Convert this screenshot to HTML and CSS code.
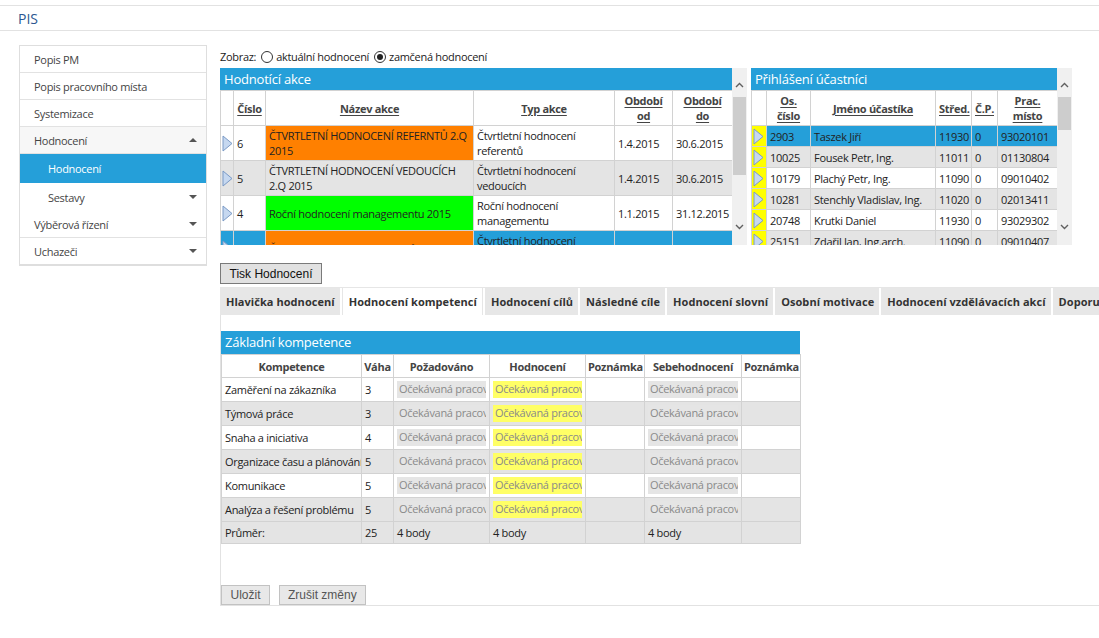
FILE: index.html
```html
<!DOCTYPE html>
<html lang="cs">
<head>
<meta charset="utf-8">
<title>PIS</title>
<link rel="stylesheet" href="styles.css">
</head>
<body>
<header class="topbar"><span class="brand">PIS</span></header>
<div class="layout">
  <nav class="sidebar">
    <div class="nav-item">Popis PM</div>
    <div class="nav-item">Popis pracovního místa</div>
    <div class="nav-item">Systemizace</div>
    <div class="nav-item nav-open">Hodnocení <span class="caret up"></span></div>
    <div class="nav-sub active">Hodnocení</div>
    <div class="nav-sub">Sestavy <span class="caret"></span></div>
    <div class="nav-item">Výběrová řízení <span class="caret"></span></div>
    <div class="nav-item last">Uchazeči <span class="caret"></span></div>
  </nav>
  <main class="main">
    <div class="filter">Zobraz: <span class="radio"></span> aktuální hodnocení <span class="radio checked"></span> zamčená hodnocení</div>
    <div class="panels">
      <section class="panel">
        <div class="panel-body akce">
          <div class="panel-head">Hodnotící akce</div>
          <table class="grid">
            <colgroup><col style="width:13px"><col style="width:32px"><col style="width:208px"><col style="width:141px"><col style="width:58px"><col style="width:60px"></colgroup>
            <tr class="hrow tall"><th></th><th><u>Číslo</u></th><th><u>Název akce</u></th><th><u>Typ akce</u></th><th><u>Období od</u></th><th><u>Období do</u></th></tr>
            <tr class="row2"><td class="ic"><svg class="tri" viewBox="0 0 11 17"><path d="M1 1 L10 8.5 L1 16 Z"/></svg></td><td>6</td><td class="orange">ČTVRTLETNÍ HODNOCENÍ REFERNTŮ 2.Q 2015</td><td>Čtvrtletní hodnocení referentů</td><td>1.4.2015</td><td>30.6.2015</td></tr>
            <tr class="row2 alt"><td class="ic"><svg class="tri" viewBox="0 0 11 17"><path d="M1 1 L10 8.5 L1 16 Z"/></svg></td><td>5</td><td>ČTVRTLETNÍ HODNOCENÍ VEDOUCÍCH 2.Q 2015</td><td>Čtvrtletní hodnocení vedoucích</td><td>1.4.2015</td><td>30.6.2015</td></tr>
            <tr class="row2"><td class="ic"><svg class="tri" viewBox="0 0 11 17"><path d="M1 1 L10 8.5 L1 16 Z"/></svg></td><td>4</td><td class="green">Roční hodnocení managementu 2015</td><td>Roční hodnocení managementu</td><td>1.1.2015</td><td>31.12.2015</td></tr>
            <tr class="row2 sel"><td class="ic"><svg class="tri" viewBox="0 0 11 17"><path d="M1 1 L10 8.5 L1 16 Z"/></svg></td><td>3</td><td class="orange one">Čtvrtletní hodnocení referentů 1.Q 2015</td><td>Čtvrtletní hodnocení referentů</td><td>1.1.2015</td><td>31.3.2015</td></tr>
          </table>
        </div>
        <div class="scroll">
          <div class="sb-up"><svg viewBox="0 0 9 6"><path d="M1 5 L4.5 1.5 L8 5"/></svg></div>
          <div class="thumb big"></div>
          <div class="sb-fill"></div>
          <div class="sb-down"><svg viewBox="0 0 9 6"><path d="M1 1 L4.5 4.5 L8 1"/></svg></div>
        </div>
      </section>
      <section class="panel">
        <div class="panel-body ucast">
          <div class="panel-head">Přihlášení účastníci</div>
          <table class="grid">
            <colgroup><col style="width:15px"><col style="width:44px"><col style="width:125px"><col style="width:36px"><col style="width:26px"><col style="width:60px"></colgroup>
            <tr class="hrow tall"><th></th><th><u>Os. číslo</u></th><th><u>Jméno účastíka</u></th><th><u>Střed.</u></th><th><u>Č.P.</u></th><th><u>Prac. místo</u></th></tr>
            <tr class="row1 sel"><td class="ic y"><svg class="tri" viewBox="0 0 11 17"><path d="M1 1 L10 8.5 L1 16 Z"/></svg></td><td>2903</td><td>Taszek Jiří</td><td>11930</td><td>0</td><td>93020101</td></tr>
            <tr class="row1 alt"><td class="ic y"><svg class="tri" viewBox="0 0 11 17"><path d="M1 1 L10 8.5 L1 16 Z"/></svg></td><td>10025</td><td>Fousek Petr, Ing.</td><td>11011</td><td>0</td><td>01130804</td></tr>
            <tr class="row1"><td class="ic y"><svg class="tri" viewBox="0 0 11 17"><path d="M1 1 L10 8.5 L1 16 Z"/></svg></td><td>10179</td><td>Plachý Petr, Ing.</td><td>11090</td><td>0</td><td>09010402</td></tr>
            <tr class="row1 alt"><td class="ic y"><svg class="tri" viewBox="0 0 11 17"><path d="M1 1 L10 8.5 L1 16 Z"/></svg></td><td>10281</td><td>Stenchly Vladislav, Ing.</td><td>11020</td><td>0</td><td>02013411</td></tr>
            <tr class="row1"><td class="ic y"><svg class="tri" viewBox="0 0 11 17"><path d="M1 1 L10 8.5 L1 16 Z"/></svg></td><td>20748</td><td>Krutki Daniel</td><td>11930</td><td>0</td><td>93029302</td></tr>
            <tr class="row1 alt"><td class="ic y"><svg class="tri" viewBox="0 0 11 17"><path d="M1 1 L10 8.5 L1 16 Z"/></svg></td><td>25151</td><td>Zdařil Jan, Ing.arch.</td><td>11090</td><td>0</td><td>09010407</td></tr>
          </table>
        </div>
        <div class="scroll">
          <div class="sb-up"><svg viewBox="0 0 9 6"><path d="M1 5 L4.5 1.5 L8 5"/></svg></div>
          <div class="thumb small"></div>
          <div class="sb-fill"></div>
          <div class="sb-down"><svg viewBox="0 0 9 6"><path d="M1 1 L4.5 4.5 L8 1"/></svg></div>
        </div>
      </section>
    </div>
    <button class="btn print">Tisk Hodnocení</button>
    <div class="tabs">
      <span class="tab">Hlavička hodnocení</span><span class="tab active">Hodnocení kompetencí</span><span class="tab">Hodnocení cílů</span><span class="tab">Následné cíle</span><span class="tab">Hodnocení slovní</span><span class="tab">Osobní motivace</span><span class="tab">Hodnocení vzdělávacích akcí</span><span class="tab">Doporučení</span>
    </div>
    <div class="tab-content">
      <div class="komp">
        <div class="panel-head kh">Základní kompetence</div>
        <table class="grid kgrid">
          <colgroup><col style="width:140px"><col style="width:32px"><col style="width:96px"><col style="width:96px"><col style="width:59px"><col style="width:97px"><col style="width:59px"></colgroup>
          <tr class="khead"><th>Kompetence</th><th>Váha</th><th>Požadováno</th><th>Hodnocení</th><th>Poznámka</th><th>Sebehodnocení</th><th>Poznámka</th></tr>
          <tr class="krow"><td>Zaměření na zákazníka</td><td>3</td><td><span class="inp">Očekávaná pracovní</span></td><td><span class="inp yel">Očekávaná pracovní</span></td><td></td><td><span class="inp">Očekávaná pracovní</span></td><td></td></tr>
          <tr class="krow alt"><td>Týmová práce</td><td>3</td><td><span class="inp">Očekávaná pracovní</span></td><td><span class="inp yel">Očekávaná pracovní</span></td><td></td><td><span class="inp">Očekávaná pracovní</span></td><td></td></tr>
          <tr class="krow"><td>Snaha a iniciativa</td><td>4</td><td><span class="inp">Očekávaná pracovní</span></td><td><span class="inp yel">Očekávaná pracovní</span></td><td></td><td><span class="inp">Očekávaná pracovní</span></td><td></td></tr>
          <tr class="krow alt"><td>Organizace času a plánování</td><td>5</td><td><span class="inp">Očekávaná pracovní</span></td><td><span class="inp yel">Očekávaná pracovní</span></td><td></td><td><span class="inp">Očekávaná pracovní</span></td><td></td></tr>
          <tr class="krow"><td>Komunikace</td><td>5</td><td><span class="inp">Očekávaná pracovní</span></td><td><span class="inp yel">Očekávaná pracovní</span></td><td></td><td><span class="inp">Očekávaná pracovní</span></td><td></td></tr>
          <tr class="krow alt"><td>Analýza a řešení problému</td><td>5</td><td><span class="inp">Očekávaná pracovní</span></td><td><span class="inp yel">Očekávaná pracovní</span></td><td></td><td><span class="inp">Očekávaná pracovní</span></td><td></td></tr>
          <tr class="kfoot alt"><td>Průměr:</td><td>25</td><td>4 body</td><td>4 body</td><td></td><td>4 body</td><td></td></tr>
        </table>
      </div>
      <div class="actions">
        <button class="btn dis save">Uložit</button>
        <button class="btn dis">Zrušit změny</button>
      </div>
    </div>
  </main>
</div>
</body>
</html>
```

FILE: styles.css
```css
* { box-sizing: border-box; }

body {
  margin: 0;
  font-family: "Open Sans", "Noto Sans", sans-serif;
  font-size: 11px;
  letter-spacing: -0.3px;
  color: #222;
  background: #fff;
  overflow: hidden;
}

.topbar {
  margin-top: 5px;
  height: 26px;
  border-top: 1px solid #e2e2e2;
  border-bottom: 1px solid #e2e2e2;
  display: flex;
  align-items: center;
  padding-left: 18px;
}

.brand {
  font-size: 14px;
  letter-spacing: 0;
  color: #2b5791;
}

.layout {
  display: flex;
  align-items: flex-start;
  padding-top: 14px;
}

.sidebar {
  margin-left: 19px;
  width: 188px;
  flex: none;
  border: 1px solid #dedede;
  border-bottom-width: 2px;
  color: #444;
}

.nav-item,
.nav-sub {
  display: flex;
  align-items: center;
  justify-content: space-between;
  padding: 0 9px 0 14px;
}

.nav-item {
  height: 27px;
  border-bottom: 1px solid #e2e2e2;
}

.nav-item.last { border-bottom: none; height: 26px; }

.nav-open { background: #f7f7f7; }

.nav-sub {
  height: 28px;
  padding-left: 28px;
}

.nav-sub.active {
  background: #259fd9;
  color: #fff;
  height: 29px;
}

.caret {
  width: 0;
  height: 0;
  border-left: 4px solid transparent;
  border-right: 4px solid transparent;
  border-top: 4px solid #555;
}

.caret.up {
  border-top: none;
  border-bottom: 4px solid #555;
}

.main {
  margin-left: 13px;
  flex: 1;
  min-width: 0;
  padding-top: 4px;
}

.filter {
  height: 16px;
  line-height: 16px;
  margin-bottom: 3px;
  display: flex;
  align-items: center;
  gap: 3px;
  white-space: nowrap;
}

.radio {
  width: 12px;
  height: 12px;
  border: 1px solid #333;
  border-radius: 50%;
  display: inline-flex;
  align-items: center;
  justify-content: center;
  margin-left: 2px;
}

.radio.checked::after {
  content: "";
  width: 6px;
  height: 6px;
  border-radius: 50%;
  background: #222;
}

.panels {
  display: flex;
  gap: 4px;
  height: 177px;
}

.panel {
  display: flex;
  height: 177px;
  overflow: hidden;
}

.panel-body { overflow: hidden; }
.panel-body.akce { width: 512px; }
.panel-body.ucast { width: 306px; }

.panel-head {
  background: #259fd9;
  color: #fff;
  font-size: 13px;
  letter-spacing: -0.2px;
  height: 22px;
  line-height: 22px;
  padding-left: 4px;
}

.scroll {
  width: 15px;
  background: #f0f0f0;
  display: flex;
  flex-direction: column;
}

.scroll svg {
  width: 9px;
  height: 6px;
  display: block;
  margin: 0 auto;
  fill: none;
  stroke: #606060;
  stroke-width: 1.4;
}

.sb-up { height: 29px; padding-top: 14px; }
.sb-down { height: 25px; padding-top: 4px; }
.sb-fill { flex: 1; }

.thumb {
  margin: 0 1px;
  background: #cdcdcd;
}
.thumb.big { height: 78px; }
.thumb.small { height: 33px; }

.grid {
  border-collapse: collapse;
  table-layout: fixed;
  width: 100%;
}

.grid th,
.grid td {
  border: 1px solid #d2d2d2;
  padding: 0 3px;
  vertical-align: middle;
  overflow: hidden;
  white-space: normal;
}

.grid th {
  font-weight: 700;
  color: #444;
  text-align: center;
  line-height: 15px;
  background: #fff;
}

.grid th u { text-decoration-thickness: 1px; text-underline-offset: 2px; }

.hrow.tall { height: 35px; }

.row2 { height: 35px; }
.row2 td { line-height: 15px; }
.row2 td.one { white-space: nowrap; }
.row1 { height: 21px; }
.row1 td { white-space: nowrap; }

.alt td { background: #e4e4e4; }
.sel td { background: #259fd9; }

.grid td.orange { background: #ff8000; }
.grid td.green { background: #00ff00; }
.grid td.ic { padding: 0 0 0 1px; }
.grid td.ic.y { background: #ffff00; padding-left: 1px; }

.tri {
  width: 11px;
  height: 17px;
  display: block;
}
.tri path {
  fill: #c6d8f0;
  stroke: #7a9ac6;
  stroke-width: 1;
}

.btn {
  font-family: "Liberation Sans", Arial, sans-serif;
  font-size: 12px;
  letter-spacing: 0;
  height: 21px;
  padding: 0 8px;
  background: #e1e1e1;
  border: 1px solid #7a7a7a;
  color: #111;
  display: block;
}

.btn.print {
  margin-top: 18px;
  width: 102px;
}

.tabs {
  margin-top: 3px;
  border-top: 1px solid #e6e6e6;
  display: flex;
  white-space: nowrap;
  overflow: hidden;
  height: 28px;
}

.tab {
  flex: none;
  height: 27px;
  line-height: 27px;
  padding: 0 5px 0 6px;
  margin-right: 2px;
  background: #e7e7e7;
  font-weight: 700;
  letter-spacing: 0.05px;
  color: #333;
}

.tab.active {
  background: #fff;
  border-left: 1px solid #e6e6e6;
  border-right: 1px solid #e6e6e6;
}

.tab-content {
  border-left: 1px solid #e2e2e2;
  border-bottom: 1px solid #e2e2e2;
  padding-top: 16px;
}

.komp { width: 579px; }

.panel-head.kh { height: 23px; line-height: 23px; }

.kgrid th { color: #444; padding: 0 2px; }
.khead { height: 23px; }
.krow { height: 24px; }
.kfoot { height: 22px; }
.kgrid td { white-space: nowrap; }

.inp {
  display: block;
  height: 17px;
  line-height: 16px;
  background: #e5e5e5;
  color: #8a8a8a;
  padding-left: 2px;
  overflow: hidden;
  white-space: nowrap;
}
.inp.yel { background: #ffff66; }

.actions {
  display: flex;
  gap: 9px;
  margin-top: 41px;
}

.btn.dis {
  height: 20px;
  background: #e8e8e8;
  border-color: #c2c2c2;
  color: #555;
  padding: 0 8px;
}

.btn.save { width: 49px; }
```
